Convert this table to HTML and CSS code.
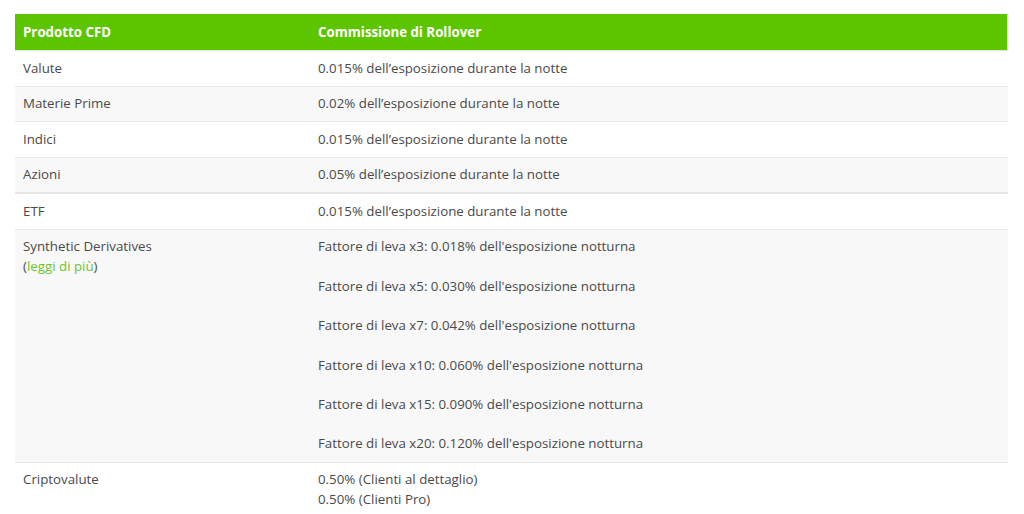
FILE: index.html
```
<!DOCTYPE html>
<html lang="it">
<head>
<meta charset="utf-8">
<link rel="stylesheet" href="styles.css">
</head>
<body>
<div class="wrap">
<table class="fees">
<thead>
<tr><th class="c1">Prodotto CFD</th><th>Commissione di Rollover</th></tr>
</thead>
<tbody>
<tr><td>Valute</td><td>0.015% dell’esposizione durante la notte</td></tr>
<tr><td>Materie Prime</td><td>0.02% dell’esposizione durante la notte</td></tr>
<tr><td>Indici</td><td>0.015% dell’esposizione durante la notte</td></tr>
<tr class="thick"><td>Azioni</td><td>0.05% dell’esposizione durante la notte</td></tr>
<tr><td>ETF</td><td>0.015% dell’esposizione durante la notte</td></tr>
<tr><td>Synthetic Derivatives<br>(<a href="#" class="more">leggi di più</a>)</td>
<td>
<p>Fattore di leva x3: 0.018% dell'esposizione notturna</p>
<p>Fattore di leva x5: 0.030% dell'esposizione notturna</p>
<p>Fattore di leva x7: 0.042% dell'esposizione notturna</p>
<p>Fattore di leva x10: 0.060% dell'esposizione notturna</p>
<p>Fattore di leva x15: 0.090% dell'esposizione notturna</p>
<p>Fattore di leva x20: 0.120% dell'esposizione notturna</p>
</td></tr>
<tr><td>Criptovalute</td><td>0.50% (Clienti al dettaglio)<br>0.50% (Clienti Pro)</td></tr>
</tbody>
</table>
</div>
</body>
</html>
```
FILE: styles.css
```
html, body { margin: 0; padding: 0; background: #fff; }
body { font-family: "Open Sans", "Liberation Sans", sans-serif; font-size: 13.3px; color: #4a4a4a; }
.wrap { padding: 14px 16px 0 15px; }
.fees { width: 993px; border-collapse: collapse; line-height: 19.5px; }
.fees th { background: #5dc500; color: #fff; font-weight: 700; text-align: left; padding: 9px 8px 7px; border-bottom: 1px solid #dfe9d6; border-right: 1px solid #cfeac0; }
.fees th.c1 { border-right: none; }
.fees th.c1, .fees td:first-child { width: 279px; }
.fees td { padding: 7.5px 8px 7.6px; vertical-align: top; border-top: 1px solid #e8e8e8; }
.fees tbody tr:first-child td { border-top: none; padding-top: 8px; }
.fees tbody tr:nth-child(even) td { background: #f8f8f8; }
.fees tr.thick + tr td { border-top: 2px solid #e6e6e6; }
.fees p { margin: 0 0 19.9px; }
.fees p:last-child { margin-bottom: 0; }
.more { color: #6cc62b; text-decoration: none; }
```
